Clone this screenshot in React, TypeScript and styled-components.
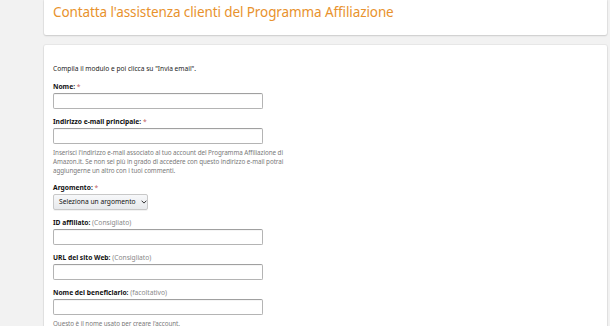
import React from "react";
import styled, { createGlobalStyle } from "styled-components";

const Global = createGlobalStyle`
  html, body { margin: 0; padding: 0; background: #f2f2f2; }
  body { font-family: "Noto Sans", "Open Sans", Arial, sans-serif; }
`;

const Page = styled.div`
  width: 610px;
  height: 326px;
  overflow: hidden;
  padding: 0 3px 0 44px;
  box-sizing: border-box;
  display: flex;
  flex-direction: column;
  gap: 10px;
`;

const Card = styled.div<{ $head?: boolean }>`
  background: #fff;
  border-radius: ${(p) => (p.$head ? "0 0 2px 2px" : "2px 2px 0 0")};
  box-shadow: 0 1px 2px rgba(0, 0, 0, 0.13), 0 0 0 1px rgba(0, 0, 0, 0.04);
  box-sizing: border-box;
`;

const HeadCard = styled(Card)`
  flex: none;
  height: 35px;
  padding: 3px 9px 0;
`;

const Title = styled.h1`
  margin: 0;
  font-weight: 400;
  font-size: 13.5px;
  line-height: 18px;
  color: #e8922d;
  letter-spacing: -0.1px;
`;

const FormCard = styled(Card)`
  flex: none;
  padding: 18.5px 9px 0;
`;

const Intro = styled.p`
  margin: 0 0 9px;
  font-size: 6.6px;
  line-height: 9px;
  color: #222;
`;

const Field = styled.div`
  margin-bottom: 8px;
`;

const Label = styled.div`
  font-size: 6.7px;
  line-height: 9px;
  font-weight: 700;
  color: #111;
  margin-bottom: 2px;
  white-space: nowrap;
`;

const Req = styled.span`
  font-weight: 400;
  color: #c06060;
`;

const Hint = styled.span`
  font-weight: 400;
  color: #888;
`;

const Input = styled.input`
  display: block;
  width: 210px;
  height: 16px;
  box-sizing: border-box;
  border: 1px solid #b4b4b4;
  border-top-color: #a0a0a0;
  border-radius: 2px;
  box-shadow: inset 0 1px 0 rgba(0, 0, 0, 0.04);
  background: #fff;
  padding: 0 4px;
  font-size: 7px;
  outline: none;
`;

const Help = styled.p`
  margin: 4px 0 0;
  width: 236px;
  font-size: 6.3px;
  letter-spacing: -0.07px;
  line-height: 9px;
  color: #7a7a7a;
`;

const Select = styled.button`
  display: flex;
  align-items: center;
  gap: 5px;
  width: 95px;
  height: 16px;
  box-sizing: border-box;
  padding: 0 0 0 5px;
  border: 1px solid #c8c8c8;
  border-radius: 2px;
  background: linear-gradient(#f7f8fa, #e7e9ec);
  box-shadow: 0 1px 0 rgba(0, 0, 0, 0.05);
  font-family: inherit;
  font-size: 6.7px;
  color: #111;
  white-space: nowrap;
  cursor: pointer;
`;

const Chevron = styled.svg`
  width: 6px;
  height: 4px;
  flex: none;
`;

export default function App() {
  return (
    <>
      <Global />
      <Page>
        <HeadCard $head>
          <Title>Contatta l'assistenza clienti del Programma Affiliazione</Title>
        </HeadCard>
        <FormCard>
          <Intro>Compila il modulo e poi clicca su "Invia email".</Intro>
          <Field>
            <Label>
              Nome: <Req>*</Req>
            </Label>
            <Input />
          </Field>
          <Field>
            <Label>
              Indirizzo e-mail principale: <Req>*</Req>
            </Label>
            <Input />
            <Help>
              Inserisci l'indirizzo e-mail associato al tuo account del Programma Affiliazione di
              Amazon.it. Se non sei più in grado di accedere con questo indirizzo e-mail potrai
              aggiungerne un altro con i tuoi commenti.
            </Help>
          </Field>
          <Field>
            <Label>
              Argomento: <Req>*</Req>
            </Label>
            <Select>
              Seleziona un argomento
              <Chevron viewBox="0 0 6 4">
                <path d="M0.6 0.7 L3 3.1 L5.4 0.7" fill="none" stroke="#333" strokeWidth="1" />
              </Chevron>
            </Select>
          </Field>
          <Field>
            <Label>
              ID affiliato: <Hint>(Consigliato)</Hint>
            </Label>
            <Input />
          </Field>
          <Field>
            <Label>
              URL del sito Web: <Hint>(Consigliato)</Hint>
            </Label>
            <Input />
          </Field>
          <Field>
            <Label>
              Nome del beneficiario: <Hint>(facoltativo)</Hint>
            </Label>
            <Input />
            <Help>Questo è il nome usato per creare l'account.</Help>
          </Field>
        </FormCard>
      </Page>
    </>
  );
}
